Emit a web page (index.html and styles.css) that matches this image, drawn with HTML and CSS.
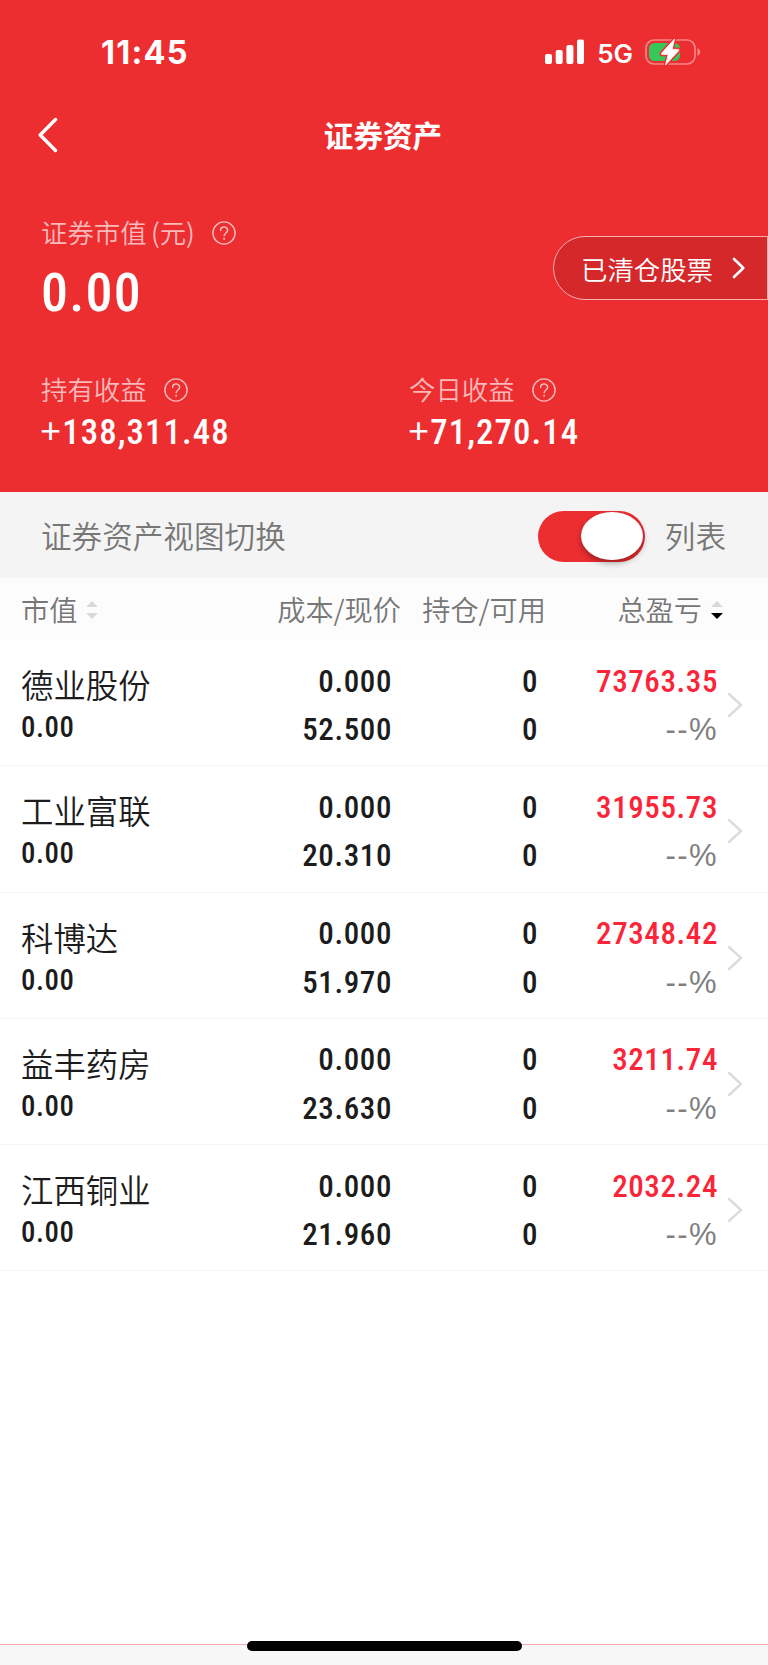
FILE: index.html
```html
<!doctype html>
<html lang="zh-CN">
    <head>
        <meta charset="UTF-8" />
        <meta name="viewport" content="width=device-width, initial-scale=1.0" />
        <title>证券资产</title>
        <link rel="stylesheet" href="styles.css">
    </head>
    <body>
        <header class="top">
            <div class="status-bar">
                <span class="time">11:45</span>
                <div class="status-icons">
                    <svg class="signal" width="40" height="26" viewBox="0 0 40 26" fill="#fff">
                        <rect x="0" y="15" width="7" height="10" rx="2" />
                        <rect x="10.7" y="11" width="7" height="14" rx="2" />
                        <rect x="21.4" y="6" width="7" height="19" rx="2" />
                        <rect x="32" y="0.5" width="7" height="24.5" rx="2" />
                    </svg>
                    <span class="network">5G</span>
                    <svg class="battery" width="56" height="28" viewBox="0 0 56 28">
                        <rect x="1" y="2" width="49" height="24" rx="8" fill="none" stroke="#f58587" stroke-width="1.7" />
                        <path d="M52.5 10.2c3.6 1 3.6 6.6 0 7.6z" fill="#f58587" />
                        <rect x="4" y="5" width="31" height="18" rx="5.5" fill="#35c759" />
                        <path d="M29.5 1 16.5 15.3q-.6 1.2.7 1.2h6L20.5 27 33.8 12.6q.6-1.2-.7-1.2h-6z" fill="#fff" stroke="#ed2e31" stroke-width="3.6" stroke-linejoin="round" />
                        <path d="M29.5 1 16.5 15.3q-.6 1.2.7 1.2h6L20.5 27 33.8 12.6q.6-1.2-.7-1.2h-6z" fill="#fff" stroke="#fff" stroke-width=".8" stroke-linejoin="round" />
                    </svg>
                </div>
            </div>

            <nav class="nav">
                <svg class="back" width="20" height="36" viewBox="0 0 20 36" fill="none" stroke="#fff" stroke-width="3.4" stroke-linecap="round" stroke-linejoin="round">
                    <path d="M17.5 2.5 2.2 18l15.3 15.5" />
                </svg>
                <h1>证券资产</h1>
            </nav>

            <section class="market">
                <div>
                    <div class="label"><span>证券市值 (元)</span>
                        <svg class="help" viewBox="0 0 24 24"><use href="#help" /></svg>
                    </div>
                    <div class="total">0.00</div>
                </div>
                <a class="cleared">
                    <span>已清仓股票</span>
                    <svg width="14" height="22" viewBox="0 0 14 22" fill="none" stroke="#fff" stroke-width="2.6" stroke-linecap="round" stroke-linejoin="round">
                        <path d="M2 2l9.3 9L2 20" />
                    </svg>
                </a>
            </section>

            <section class="income">
                <div>
                    <div class="label"><span>持有收益</span>
                        <svg class="help" viewBox="0 0 24 24"><use href="#help" /></svg>
                    </div>
                    <div class="amount"><i>+</i>138,311.48</div>
                </div>
                <div>
                    <div class="label"><span>今日收益</span>
                        <svg class="help" viewBox="0 0 24 24"><use href="#help" /></svg>
                    </div>
                    <div class="amount"><i>+</i>71,270.14</div>
                </div>
            </section>
        </header>

        <div class="switch-bar">
            <span>证券资产视图切换</span>
            <div class="switch"><div class="knob"></div></div>
            <span>列表</span>
        </div>

        <div class="grid table-head">
            <div>市值<svg class="sort" viewBox="0 0 12 18"><path class="off" d="M0 6 6 0l6 6z" /><path class="off" d="M0 12h12l-6 6z" /></svg></div>
            <div>成本/现价</div>
            <div>持仓/可用</div>
            <div>总盈亏<svg class="sort" viewBox="0 0 12 18"><path class="off" d="M0 6 6 0l6 6z" /><path class="on" d="M0 12h12l-6 6z" /></svg></div>
        </div>

        <main id="stocks"></main>

        <footer class="bottom">
            <div class="home-indicator"></div>
        </footer>

        <svg width="0" height="0" class="defs">
            <symbol id="help" viewBox="0 0 24 24">
                <circle cx="12" cy="12" r="11.1" fill="none" stroke="currentColor" stroke-width="1.4" />
                <path d="M8.6 9.4c0-4.4 7-4.4 7-.2 0 2.6-3.4 2.9-3.4 5.6" fill="none" stroke="currentColor" stroke-width="1.5" stroke-linecap="round" />
                <circle cx="12.1" cy="17.8" r="1" fill="currentColor" />
            </symbol>
        </svg>

        <script>
            const stocks = [
                { name: "德业股份", price: "52.500", profit: "73763.35" },
                { name: "工业富联", price: "20.310", profit: "31955.73" },
                { name: "科博达", price: "51.970", profit: "27348.42" },
                { name: "益丰药房", price: "23.630", profit: "3211.74" },
                { name: "江西铜业", price: "21.960", profit: "2032.24" },
            ];

            document.getElementById("stocks").innerHTML = stocks.map((s) => `
                <div class="grid row">
                    <div class="stock"><div class="name">${s.name}</div><div class="value">0.00</div></div>
                    <div class="num"><div>0.000</div><div>${s.price}</div></div>
                    <div class="num"><div>0</div><div>0</div></div>
                    <div class="num"><div class="profit">${s.profit}</div><div class="percent">--%</div></div>
                    <svg class="arrow" width="16" height="26" viewBox="0 0 16 26"><path d="M2 2l12 11L2 24" /></svg>
                </div>`).join("");
        </script>
    </body>
</html>
```
FILE: styles.css
```css
* {
    box-sizing: border-box;
}
body {
    margin: 0;
    height: 1665px;
    display: flex;
    flex-direction: column;
    background: #fff;
    color: #1c1c1c;
    font-family: "Noto Sans CJK SC", sans-serif;
    font-weight: 350;
    overflow: hidden;
}
.defs {
    position: absolute;
}
.top {
    height: 492px;
    flex: none;
    background: #ed2e31;
    color: #fff;
}
.status-bar {
    height: 104px;
    padding: 0 67px 0 101px;
    display: flex;
    justify-content: space-between;
    align-items: center;
    font-family: Inter, sans-serif;
}
.time {
    font-size: 32.5px;
    font-weight: 700;
    letter-spacing: 1.2px;
}
.status-icons {
    display: flex;
    align-items: center;
}
.network {
    margin: 2px 12px 0 12px;
    font-size: 26px;
    font-weight: 600;
}
.nav {
    height: 62px;
    padding-left: 38px;
    display: grid;
    grid-template-columns: 20px 1fr 60px;
    align-items: center;
}
.nav h1 {
    margin: 0;
    text-align: center;
    font-size: 29.6px;
    font-weight: 700;
    line-height: 40px;
}
.market {
    height: 204px;
    padding: 47px 0 0 41px;
    display: flex;
    justify-content: space-between;
}
.label {
    height: 40px;
    display: flex;
    align-items: center;
    font-size: 26.4px;
    color: #fab9ba;
}
.label span {
    line-height: 40px;
    padding-bottom: 3px;
}
.market .label span {
    word-spacing: -1.5px;
}
.help {
    width: 24px;
    height: 24px;
    margin-left: 17px;
}
.total {
    height: 78px;
    font: 500 54px/80px Roboto, sans-serif;
    font-stretch: 85%;
    letter-spacing: 1.2px;
}
.cleared {
    width: 215px;
    height: 64px;
    margin-top: 23px;
    padding: 0 21px 0 27px;
    display: flex;
    align-items: center;
    justify-content: space-between;
    border: 1.5px solid #f8adae;
    border-radius: 32px 0 0 32px;
    background: #d4282b;
    font-size: 26.4px;
}
.income {
    padding-left: 41px;
    display: grid;
    grid-template-columns: 368px 1fr;
}
.amount {
    font: 500 34.8px/44px Roboto, sans-serif;
    font-stretch: 85%;
    letter-spacing: 1.1px;
}
.amount i {
    font: 400 37px/40px "Noto Sans", sans-serif;
    letter-spacing: 0;
    margin: 0 1px 0 -1px;
}
.switch-bar {
    height: 86px;
    flex: none;
    padding: 0 42px 0 41px;
    display: flex;
    align-items: center;
    background: #f4f4f4;
    font-size: 30.6px;
    color: #777;
}
.switch {
    width: 107px;
    height: 51px;
    margin: 2px 20px 0 auto;
    padding: 1px 2px;
    border-radius: 26px;
    background: #ed2e31;
}
.knob {
    width: 62px;
    height: 48px;
    margin-left: auto;
    border-radius: 50%;
    background: #fff;
    box-shadow: 0 3px 6px rgba(0, 0, 0, 0.35);
}
.grid {
    display: grid;
    grid-template-columns: 180px 191px 146px 180px 1fr;
    padding-left: 21px;
}
.table-head {
    height: 61px;
    flex: none;
    grid-template-columns: 180px 200px 145px 177px 1fr;
    align-items: center;
    background: #fcfcfc;
    font-size: 28.2px;
    color: #777;
    text-align: right;
    white-space: nowrap;
}
.table-head div:first-child {
    text-align: left;
}
.sort {
    width: 12px;
    height: 18px;
    margin: 0 0 2px 9px;
}
.off {
    fill: #d9d9d9;
}
.on {
    fill: #000;
}
#stocks {
    padding-top: 1px;
}
.row {
    height: 126.3px;
    border-bottom: 1px solid #f5f5f5;
}
.name {
    margin-top: 20px;
    font-size: 32.4px;
    line-height: 48px;
}
.value {
    font: 500 28.8px/36px Roboto, sans-serif;
    font-stretch: 85%;
    letter-spacing: 0.6px;
    margin-top: 1px;
}
.num {
    padding-top: 17.5px;
    text-align: right;
    font: 500 31px/48.6px Roboto, sans-serif;
    font-stretch: 85%;
    letter-spacing: 0.6px;
}
.profit {
    color: #fb2438;
}
.percent {
    font-family: "Liberation Sans", sans-serif;
    font-weight: 400;
    letter-spacing: 1.4px;
    color: #808080;
}
.arrow {
    margin: 52px 0 0 9px;
    fill: none;
    stroke: #dcdcdc;
    stroke-width: 2.4;
    stroke-linecap: round;
    stroke-linejoin: round;
}
.bottom {
    height: 21px;
    margin-top: auto;
    border-top: 1px solid #f9a9ab;
    background: #f7f7f7;
}
.home-indicator {
    position: relative;
    top: -4px;
    width: 275px;
    height: 10px;
    margin: 0 auto;
    border-radius: 5px;
    background: #000;
}
```
